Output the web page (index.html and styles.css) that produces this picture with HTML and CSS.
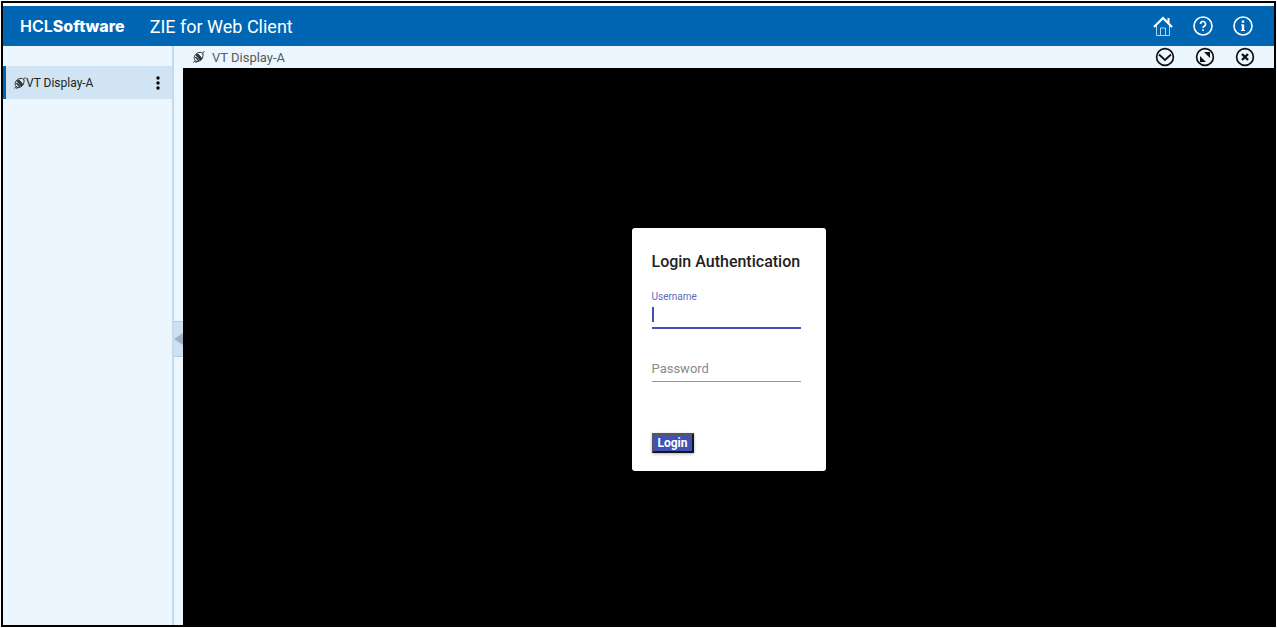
FILE: index.html
```html
<!DOCTYPE html>
<html lang="en">
<head>
    <meta charset="UTF-8">
    <meta name="viewport" content="width=device-width, initial-scale=1.0">
    <title>ZIE for Web Client</title>
    <link rel="stylesheet" href="styles.css">
</head>
<body>
    <svg class="defs" aria-hidden="true">
        <symbol id="plug" viewBox="0 0 24 24">
            <g fill="none" stroke="currentColor" stroke-width="2">
                <path d="M3 10C6 4 13 1 19 4c3 5 0 12-6 16-4 2-7 1-9-1-2-3-2-6-1-9z"/>
                <path d="M6 8l4-2 8 9-3 4z" fill="currentColor"/>
                <path d="M5 12l7 8" stroke-width="3"/>
                <path d="M19 4l4-3M4 19l-3 4M4 22h4"/>
            </g>
        </symbol>
    </svg>
    <div class="app">
        <header class="header">
            <span class="brand">HCL<b>Software</b></span>
            <h1>ZIE for Web Client</h1>
            <nav class="actions">
                <a href="#" aria-label="Home">
                    <svg viewBox="0 0 20 20" fill="none" stroke="currentColor">
                        <path d="M1 11l9-9 9 9" stroke-width="2.2"/>
                        <path d="M15.5 2v5" stroke-width="2"/>
                        <path d="M3.5 10v9.5h13V10M7.5 19v-7h5v7" opacity="0.7"/>
                    </svg>
                </a>
                <a href="#" aria-label="Help">
                    <svg viewBox="0 0 20 20" fill="none" stroke="currentColor" stroke-width="1.6">
                        <circle cx="10" cy="10" r="9"/>
                        <path d="M7.5 8a2.5 2.5 0 1 1 3.7 2.2c-.9.5-1.2.9-1.2 1.8M10 13.3v1.7"/>
                    </svg>
                </a>
                <a href="#" aria-label="About">
                    <svg viewBox="0 0 20 20" fill="none" stroke="currentColor" stroke-width="1.6">
                        <circle cx="10" cy="10" r="9"/>
                        <path d="M10 8.5V15M10 4.5v2.3" stroke-width="2.4"/>
                        <path d="M8 9h2M8 14.5h4" stroke-width="1"/>
                    </svg>
                </a>
            </nav>
        </header>
        <div class="main">
            <aside class="sidebar">
                <div class="session">
                    <svg class="plug"><use href="#plug"/></svg>
                    <span>VT Display-A</span>
                    <button class="more" aria-label="Session menu">
                        <svg viewBox="0 0 4 14" fill="currentColor">
                            <circle cx="2" cy="2" r="1.7"/>
                            <circle cx="2" cy="7" r="1.7"/>
                            <circle cx="2" cy="12" r="1.7"/>
                        </svg>
                    </button>
                </div>
            </aside>
            <div class="content">
                <div class="tabbar">
                    <svg class="plug"><use href="#plug"/></svg>
                    <span>VT Display-A</span>
                    <div class="actions">
                        <button aria-label="Show more">
                            <svg viewBox="0 0 20 20" fill="none" stroke="currentColor" stroke-width="1.7">
                                <circle cx="10" cy="10" r="8.4"/>
                                <path d="M4 7.500l6 5.500 6-5.500"/>
                            </svg>
                        </button>
                        <button aria-label="Expand">
                            <svg viewBox="0 0 20 20" fill="none" stroke="currentColor" stroke-width="1.7">
                                <circle cx="10" cy="10" r="8.4"/>
                                <path d="M9 5h6v6zM5 9v6h6z" fill="currentColor" stroke="none"/>
                            </svg>
                        </button>
                        <button aria-label="Close">
                            <svg viewBox="0 0 20 20" fill="none" stroke="currentColor" stroke-width="1.7">
                                <circle cx="10" cy="10" r="8.4"/>
                                <path d="M7 7l6 6M13 7l-6 6" stroke-width="2.4"/>
                            </svg>
                        </button>
                    </div>
                </div>
                <div class="workspace">
                    <div class="splitter">
                        <button class="collapse" aria-label="Collapse sidebar">
                            <svg viewBox="0 0 9 12"><path d="M9 0v12L0 6z" fill="#9db3c5"/></svg>
                        </button>
                    </div>
                    <div class="terminal">
                        <form class="login">
                            <h2>Login Authentication</h2>
                            <label for="username">Username</label>
                            <input class="field focused" id="username" type="text">
                            <input class="field" id="password" type="password" placeholder="Password" aria-label="Password">
                            <button class="submit" type="button">Login</button>
                        </form>
                    </div>
                </div>
            </div>
        </div>
    </div>
</body>
</html>
```

FILE: styles.css
```css
* {
    box-sizing: border-box;
}
body {
    margin: 0;
    padding: 1px;
    height: 100vh;
    font-family: Roboto, sans-serif;
    background-color: #ffffff;
}
.defs {
    position: absolute;
    width: 0;
    height: 0;
}
.app {
    display: flex;
    flex-direction: column;
    height: 100%;
    border: 2px solid #000000;
    padding-top: 3px;
}
button {
    display: flex;
    padding: 0;
    border: none;
    background: none;
    color: inherit;
    font-family: inherit;
    cursor: pointer;
}
.header {
    display: flex;
    align-items: center;
    height: 40px;
    padding: 0 21px 0 17px;
    background-color: #0066b3;
    color: #ffffff;
}
.brand {
    font-family: Inter, sans-serif;
    font-size: 16px;
    font-weight: 600;
}
.brand b {
    font-weight: 800;
}
.header h1 {
    margin: 0 0 0 25px;
    font-size: 18px;
    font-weight: 400;
}
.actions {
    display: flex;
    gap: 20px;
    margin-left: auto;
}
.actions a {
    display: flex;
    color: #ffffff;
}
.actions svg {
    width: 20px;
    height: 20px;
}
.main {
    display: flex;
    flex: 1;
    min-height: 0;
    background-color: #ebf6ff;
}
.sidebar {
    width: 171px;
    padding-top: 20px;
    border-right: 2px solid #c5daec;
}
.session {
    display: flex;
    align-items: center;
    height: 33px;
    padding: 0 12px 0 8px;
    border-left: 3px solid #0066b3;
    background-color: #d0e4f4;
    color: #222222;
    font-size: 12px;
}
.plug {
    width: 12px;
    height: 12px;
    color: #333333;
}
.more {
    margin-left: auto;
    color: #000000;
}
.more svg {
    width: 4px;
    height: 14px;
}
.content {
    display: flex;
    flex: 1;
    flex-direction: column;
}
.tabbar {
    display: flex;
    align-items: center;
    height: 22px;
    padding: 0 19px;
    color: #5a5a5a;
    font-size: 13px;
}
.tabbar span {
    margin-left: 7px;
}
.tabbar button {
    color: #111111;
}
.workspace {
    display: flex;
    flex: 1;
}
.splitter {
    display: flex;
    align-items: center;
    width: 9px;
}
.collapse {
    align-items: center;
    width: 9px;
    height: 36px;
    margin-bottom: 16px;
    border: 1px solid #b4cce0;
    border-width: 1px 0;
    background-color: #cde1f2;
}
.collapse svg {
    width: 9px;
    height: 12px;
}
.terminal {
    display: flex;
    align-items: center;
    justify-content: center;
    flex: 1;
    padding-top: 6px;
    background-color: #000000;
}
.login {
    display: flex;
    flex-direction: column;
    align-items: flex-start;
    min-width: 194px;
    padding: 22px 20px 18px;
    border-radius: 3px;
    background-color: #ffffff;
}
.login h2 {
    margin: 0 0 17px;
    color: #222222;
    font-size: 16px;
    font-weight: 500;
    line-height: 24px;
}
.login label {
    color: #5c6bc0;
    font-size: 10px;
    line-height: 12px;
}
.field {
    width: 149px;
    height: 24px;
    padding: 0 0 2px;
    border: none;
    border-bottom: 1px solid #949494;
    outline: none;
    background: none;
    font-family: inherit;
    font-size: 13px;
}
.field::placeholder {
    color: #8a8a8a;
}
.field.focused {
    height: 26px;
    margin-bottom: 29px;
    border-bottom: 2px solid #3f51b5;
    background: linear-gradient(#3f51b5, #3f51b5) 0 4px / 2px 15px no-repeat;
    caret-color: transparent;
}
.submit {
    margin-top: 51px;
    padding: 0 4px;
    border: 2px solid;
    border-color: #55555a #15151a #15151a #55555a;
    background-color: #3f51b5;
    color: #ffffff;
    font-size: 12px;
    font-weight: 700;
    line-height: 16px;
    box-shadow: 0 1px 3px rgba(0, 0, 0, 0.3);
}
```
